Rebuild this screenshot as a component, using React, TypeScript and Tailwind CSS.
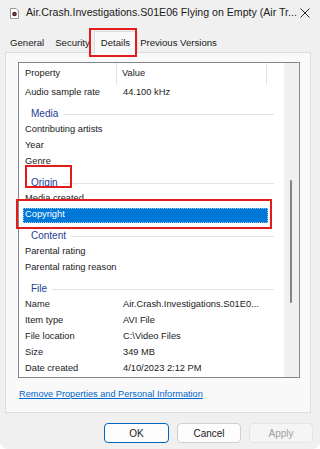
import React from "react";

type Row =
  | { kind: "item"; label: string; value?: string; selected?: boolean }
  | { kind: "group"; label: string };

const rows: Row[] = [
  { kind: "item", label: "Audio sample rate", value: "44.100 kHz" },
  { kind: "group", label: "Media" },
  { kind: "item", label: "Contributing artists" },
  { kind: "item", label: "Year" },
  { kind: "item", label: "Genre" },
  { kind: "group", label: "Origin" },
  { kind: "item", label: "Media created" },
  { kind: "item", label: "Copyright", selected: true },
  { kind: "group", label: "Content" },
  { kind: "item", label: "Parental rating" },
  { kind: "item", label: "Parental rating reason" },
  { kind: "group", label: "File" },
  { kind: "item", label: "Name", value: "Air.Crash.Investigations.S01E0..." },
  { kind: "item", label: "Item type", value: "AVI File" },
  { kind: "item", label: "File location", value: "C:\\Video Files" },
  { kind: "item", label: "Size", value: "349 MB" },
  { kind: "item", label: "Date created", value: "4/10/2023 2:12 PM" },
];

const FileIcon = () => (
  <svg width="9" height="11" viewBox="0 0 9 11">
    <path d="M0.5 0.5 H6 L8.5 3 V10.5 H0.5 Z" fill="#fff" stroke="#9a9a9a" />
    <circle cx="4.5" cy="6" r="2.3" fill="#3a2a2a" />
    <circle cx="4.5" cy="6" r="0.9" fill="#d23b3b" />
  </svg>
);

const CloseIcon = () => (
  <svg width="10" height="10" viewBox="0 0 10 10">
    <path d="M0.5 0.5 L9.5 9.5 M9.5 0.5 L0.5 9.5" stroke="#2b2b2b" strokeWidth="1" />
  </svg>
);

const ListRow = ({ row }: { row: Row }) => {
  if (row.kind === "group") {
    return (
      <div className="h-[21px] flex items-end pb-[3px] pl-[12px] pr-[10px]">
        <span className="text-[10px] text-[#1e3c96] leading-none">{row.label}</span>
        <div className="flex-1 h-px bg-[#dfe2ea] ml-[5px] mb-[4px]" />
      </div>
    );
  }
  return (
    <div className="h-4 flex items-center">
      {row.selected ? (
        <div className="ml-[4px] w-[245px] h-[15px] bg-[#0078d7] border border-dotted border-[#9cc8f0] flex items-center text-white">
          <span className="pl-[1px]">{row.label}</span>
        </div>
      ) : (
        <>
          <span className="w-[98px] pl-[6px] truncate">{row.label}</span>
          <span className="pl-[6px]">{row.value ?? ""}</span>
        </>
      )}
    </div>
  );
};

export default function App() {
  return (
    <div
      className="relative w-[320px] h-[449px] bg-[#f0f0f0] overflow-hidden rounded-b-[8px] text-[#1a1a1a]"
      style={{ fontFamily: '"Liberation Sans", Arial, sans-serif' }}
    >
      {/* title bar */}
      <div className="h-[26px] flex items-center pl-[10px] pr-[10px]">
        <FileIcon />
        <span className="ml-[7px] text-[10.6px] flex-1 whitespace-nowrap">
          Air.Crash.Investigations.S01E06 Flying on Empty (Air Tr...
        </span>
        <CloseIcon />
      </div>

      {/* tabs */}
      <div className="h-[26px] flex items-end pl-[5px] text-[9.6px]">
        <div className="h-[18px] flex items-center px-[5px]">General</div>
        <div className="h-[18px] flex items-center pl-[6px] pr-[4px]">Security</div>
        <div className="h-[22px] -mb-px relative z-10 flex items-center pl-[6px] pr-[7px] pt-[2px] bg-[#f9f9f9] border border-b-0 border-[#dcdcdc]">
          Details
        </div>
        <div className="h-[18px] flex items-center px-[2px]">Previous Versions</div>
      </div>

      {/* panel */}
      <div className="mx-[5px] w-[306px] h-[361px] bg-[#f9f9f9] border border-[#dcdcdc] pt-[9px] pl-[12px]">
        <div className="w-[282px] h-[316px] border border-[#828790] bg-white flex text-[9.3px]">
          <div className="w-[265px] flex flex-col">
            <div className="h-[22px] flex items-center">
              <span className="w-[98px] pl-[6px] h-full flex items-center border-r border-[#e5e5e5]">Property</span>
              <span className="w-[150px] pl-[5px] h-full flex items-center border-r border-[#e5e5e5]">Value</span>
            </div>
            {rows.map((r, i) => (
              <ListRow key={i} row={r} />
            ))}
          </div>
          <div className="flex-1" />
          <div className="w-[15px] bg-[#f0f0f0] relative">
            <div className="absolute left-[6px] top-[117px] w-[2px] h-[123px] rounded-full bg-[#858585]" />
          </div>
        </div>
        <div className="mt-[10px] pl-[1px] text-[9.2px] text-[#0066cc] underline">
          Remove Properties and Personal Information
        </div>
      </div>

      {/* buttons */}
      <div className="flex gap-[8px] pl-[104px] mt-[10px] text-[10px]">
        <button className="w-[65px] h-[20px] rounded-[4px] bg-[#fdfdfd] border border-[#0067c0] text-[#1a1a1a]">OK</button>
        <button className="w-[64px] h-[20px] rounded-[4px] bg-[#fdfdfd] border border-[#d0d0d0] text-[#1a1a1a]">Cancel</button>
        <button className="w-[64px] h-[20px] rounded-[4px] bg-[#f5f5f5] border border-[#e5e5e5] text-[#a0a0a0]">Apply</button>
      </div>

      {/* red annotation boxes */}
      <div className="absolute left-[89px] top-[28px] w-[48px] h-[29px] border-2 border-[#e21b1b] z-20" />
      <div className="absolute left-[25px] top-[165px] w-[47px] h-[23px] border-2 border-[#e21b1b] z-20" />
      <div className="absolute left-[16px] top-[199px] w-[256px] h-[30px] border-2 border-[#e21b1b] z-20" />
    </div>
  );
}
